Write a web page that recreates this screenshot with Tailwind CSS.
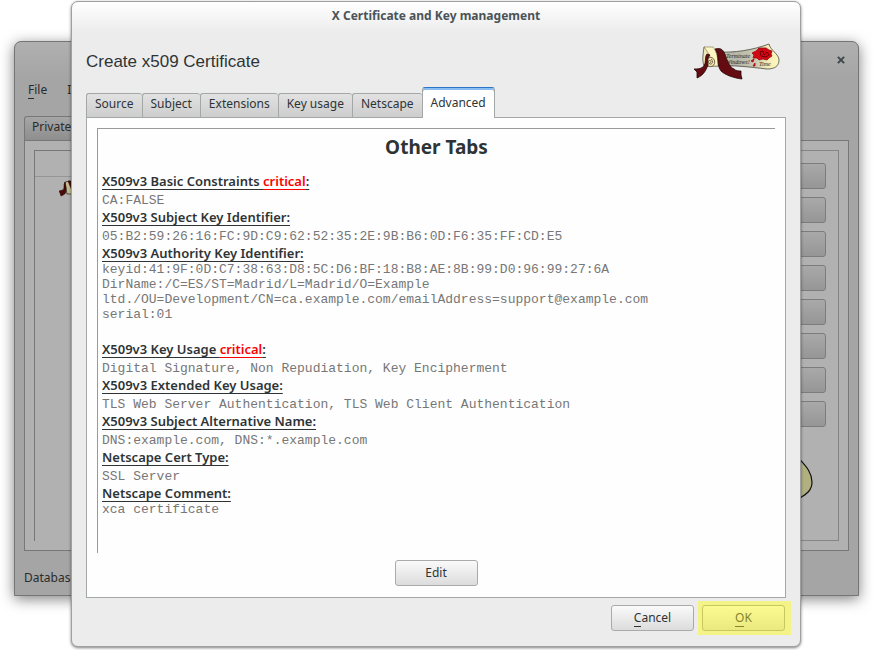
<!DOCTYPE html>
<html lang="en">
<head>
<meta charset="utf-8">
<title>X Certificate and Key management</title>
<script src="https://cdn.jsdelivr.net/npm/@tailwindcss/browser@4"></script>
</head>
<body class="relative min-h-screen overflow-hidden bg-white font-['Noto_Sans',sans-serif] text-[12px] leading-[18px] text-[#2e3436]">

<!-- Main window, dimmed behind the dialog -->
<div class="absolute inset-x-[14px] top-[41px] flex flex-col rounded-t-[7px] border border-[#757575] bg-[#a5a5a5] bg-linear-to-b from-[#b0b0b0] to-[#a5a5a5] to-[36px] px-[9px] pb-2 text-[#2b2b2b] shadow-[0_3px_14px_rgba(0,0,0,0.5)]">
  <header class="flex h-[36px] items-center justify-end px-1">
    <button aria-label="Close" class="text-[#3c484c]"><svg class="size-[8px]" viewBox="0 0 9 9" fill="none" stroke="currentColor" stroke-width="2.2"><path d="M1 1l7 7M8 1l-7 7"/></svg></button>
  </header>
  <nav class="flex h-[38px] gap-[20px] px-1 pt-[3px]"><a href="#"><span class="border-b border-current">F</span>ile</a><a href="#">Import</a></nav>
  <div class="flex"><button class="h-[24px] rounded-t-[3px] border border-b-0 border-[#777] bg-linear-to-b from-[#a6a6a6] to-[#8e8e8e] px-[7px] pb-[3px]">Private Keys</button></div>
  <main class="flex h-[411px] border border-[#777] bg-[#b1b1b1] p-[9px]">
    <div class="flex-1 border-t border-l border-[#777]">
      <div class="h-[26px] border-b border-[#959595]"></div>
      <svg class="mt-[3px] ml-[24px] h-[17px] w-[28px]" viewBox="0 0 28 17"><path d="M6 2l5-1 5 13H8z" fill="#c3bf91" stroke="#222" stroke-width=".7"/><path d="M6 2c-2 3 0 6-2 8l-4 1 1 2 1 3c5-2 5-3 5-8zM9 1l5 12 4 3-3-15z" fill="#4d0909" stroke="#170000" stroke-width=".5"/></svg>
    </div>
    <div class="flex w-[150px] flex-col gap-2 border border-[#858585] px-[12px] pt-3">
      <button aria-label="New Key" class="h-[26px] shrink-0 rounded-[3px] border border-[#7c7c7c] bg-linear-to-b from-[#a9a9a9] to-[#969696]"></button>
      <button aria-label="Export" class="h-[26px] shrink-0 rounded-[3px] border border-[#7c7c7c] bg-linear-to-b from-[#a9a9a9] to-[#969696]"></button>
      <button aria-label="Import" class="h-[26px] shrink-0 rounded-[3px] border border-[#7c7c7c] bg-linear-to-b from-[#a9a9a9] to-[#969696]"></button>
      <button aria-label="Import PFX" class="h-[26px] shrink-0 rounded-[3px] border border-[#7c7c7c] bg-linear-to-b from-[#a9a9a9] to-[#969696]"></button>
      <button aria-label="Show Details" class="h-[26px] shrink-0 rounded-[3px] border border-[#7c7c7c] bg-linear-to-b from-[#a9a9a9] to-[#969696]"></button>
      <button aria-label="Delete" class="h-[26px] shrink-0 rounded-[3px] border border-[#7c7c7c] bg-linear-to-b from-[#a9a9a9] to-[#969696]"></button>
      <button aria-label="Rename" class="h-[26px] shrink-0 rounded-[3px] border border-[#7c7c7c] bg-linear-to-b from-[#a9a9a9] to-[#969696]"></button>
      <button aria-label="Change Password" class="h-[26px] shrink-0 rounded-[3px] border border-[#7c7c7c] bg-linear-to-b from-[#a9a9a9] to-[#969696]"></button>
      <svg class="mt-5 mr-[13px] h-[50px] w-[60px] shrink-0 self-end" viewBox="0 0 60 50"><path d="M0 12L44 1c5 7 15 14 15 26 0 8-5 12-12 16L0 40z" fill="#b0b080" stroke="#111" stroke-width="1.2"/></svg>
    </div>
  </main>
  <footer class="pt-[18px]">Database: example.xdb</footer>
</div>

<!-- Certificate dialog -->
<section class="relative mr-[72px] ml-[71px] mt-px flex flex-col rounded-[7px] border border-[#a0a0a0] bg-[#ececec] bg-linear-to-b from-white to-[#ececec] to-[30px] px-[14px] pb-[11px] shadow-[0_1px_3px_rgba(0,0,0,0.5)]">
  <h1 class="flex h-[28px] items-center justify-center font-bold text-[#4a5458]">X Certificate and Key management</h1>
  <div class="flex h-[57px] items-start justify-between pr-[6px]">
    <h2 class="pt-[22px] font-['Liberation_Sans',sans-serif] text-[17px] leading-[20px]">Create x509 Certificate</h2>
    <svg class="mt-[11px] h-[40px] w-[90px]" viewBox="0 0 90 40" role="img" aria-label="Certificate scroll">
      <defs><linearGradient id="paper" x2="1"><stop stop-color="#f3ebb9"/><stop offset=".25" stop-color="#c9c8b0"/><stop offset=".4" stop-color="#b4b4a8"/><stop offset=".7" stop-color="#c9c9b4"/><stop offset=".85" stop-color="#f3ecb6"/><stop offset="1" stop-color="#fff8bd"/></linearGradient></defs>
      <path d="M14 6l13 5c17 1 36-2 52-8 1 6 10 10 10 16 0 6-4 9-12 9-18-2-32-4-50-3l-13 0c-2-6-1-11 0-19z" fill="url(#paper)" stroke="#4c4b3c" stroke-width=".8"/>
      <path d="M14 6l9 0c4 5 5 12 5 19l-6 0c-1-7-1-10-8-19z" fill="#fff6c4" stroke="#77714b" stroke-width=".6"/>
      <ellipse cx="20.500" cy="21" rx="4.200" ry="4.600" fill="#f7eab3" stroke="#4e442e" stroke-width=".8"/><path d="M21 18c3 2 1 6-1 5s-2-4 0-3.500 1 2 0 2" fill="none" stroke="#4e442e" stroke-width=".8"/>
      <path d="M17 13c-3 4 0 9-4 13-3 2-6 2-9 2l3 3v6c7-3 9-8 11-13 0-3-1-7 2-10zM25 8c7-2 9 2 11 8s4 10 8 12c2 2 5 2 7 2l0 4 1 4c-8-1-17-4-21-8-5-6-1-16-6-22z" fill="#650b12" stroke="#260508" stroke-width=".8"/>
      <path d="M69 7l4 0 3 0 3 2 3 1-1 3 1 2-3 2-2 2-4-1-4 1-2-2-4 0 1-3-2-2 4-2z" fill="#d10813" stroke="#9b0811" stroke-width=".8"/><path d="M70 11l3-1 1 4 3-3 2 3-3 2-5-1z" fill="none" stroke="#590009" stroke-width=".9"/><path d="M61 20l3-2-1 3zM63 25l2-3v3z" fill="#d20c16" stroke="#a40912" stroke-width=".8"/>
      <g fill="#252520" font-family="Liberation Serif, serif" font-style="italic"><text x="36" y="17" font-size="6">Terminate</text><text x="36" y="23" font-size="6">Windows!</text><text x="69" y="25" font-size="6">Time</text></g>
    </svg>
  </div>

  <div role="tablist" class="flex h-[30px] items-end">
    <button role="tab" class="h-[24px] rounded-t-[3px] border border-r-0 border-b-0 border-[#a3a7a7] bg-linear-to-b from-[#e2e2e2] to-[#cdcdcd] px-2 pb-1">Source</button>
    <button role="tab" class="h-[24px] rounded-t-[3px] border border-r-0 border-b-0 border-[#a3a7a7] bg-linear-to-b from-[#e2e2e2] to-[#cdcdcd] px-2 pb-1">Subject</button>
    <button role="tab" class="h-[24px] rounded-t-[3px] border border-r-0 border-b-0 border-[#a3a7a7] bg-linear-to-b from-[#e2e2e2] to-[#cdcdcd] px-2 pb-1">Extensions</button>
    <button role="tab" class="h-[24px] rounded-t-[3px] border border-r-0 border-b-0 border-[#a3a7a7] bg-linear-to-b from-[#e2e2e2] to-[#cdcdcd] px-2 pb-1">Key usage</button>
    <button role="tab" class="h-[24px] rounded-t-[3px] border border-r-0 border-b-0 border-[#a3a7a7] bg-linear-to-b from-[#e2e2e2] to-[#cdcdcd] px-2 pb-1">Netscape</button>
    <button role="tab" aria-selected="true" class="relative -mb-px h-[31px] rounded-t-[3px] border border-b-0 border-[#a3a7a7] border-t-[#2a76c6] bg-white px-2 pb-px shadow-[inset_0_2px_0_#8abdf0]">Advanced</button>
  </div>

  <div role="tabpanel" class="flex flex-col items-center border border-[#a3a7a7] bg-[#fefefe] px-[10px] pt-[10px] pb-[11px]">
    <article class="h-[425px] w-full border-t border-l border-[#9a9a9a] px-1 pt-[5px]">
      <h3 class="mb-[11px] text-center text-[19px] leading-[27px] font-bold">Other Tabs</h3>
      <dl class="font-['Liberation_Mono',monospace] text-[13px] text-[#777] [&>dt]:font-['Noto_Sans',sans-serif] [&>dt]:font-semibold [&>dt]:text-[#2e3436] [&>dt]:underline [&>dt]:underline-offset-3">
        <dt>X509v3 Basic Constraints <span class="text-[#f00] underline underline-offset-3">critical</span>:</dt>
        <dd class="pt-[4px] leading-[14px]">CA:FALSE</dd>
        <dt>X509v3 Subject Key Identifier:</dt>
        <dd class="pt-[4px] leading-[14px]">05:B2:59:26:16:FC:9D:C9:62:52:35:2E:9B:B6:0D:F6:35:FF:CD:E5</dd>
        <dt>X509v3 Authority Key Identifier:</dt>
        <dd class="mb-[18px] leading-[15px]">keyid:41:9F:0D:C7:38:63:D8:5C:D6:BF:18:B8:AE:8B:99:D0:96:99:27:6A<br>DirName:/C=ES/ST=Madrid/L=Madrid/O=Example<br>ltd./OU=Development/CN=ca.example.com/emailAddress=support@example.com<br>serial:01</dd>
        <dt>X509v3 Key Usage <span class="text-[#f00] underline underline-offset-3">critical</span>:</dt>
        <dd class="pt-[4px] leading-[14px]">Digital Signature, Non Repudiation, Key Encipherment</dd>
        <dt>X509v3 Extended Key Usage:</dt>
        <dd class="pt-[4px] leading-[14px]">TLS Web Server Authentication, TLS Web Client Authentication</dd>
        <dt>X509v3 Subject Alternative Name:</dt>
        <dd class="pt-[4px] leading-[14px]">DNS:example.com, DNS:*.example.com</dd>
        <dt>Netscape Cert Type:</dt>
        <dd class="pt-[4px] leading-[14px]">SSL Server</dd>
        <dt>Netscape Comment:</dt>
        <dd class="leading-[15px]">xca certificate</dd>
      </dl>
    </article>
    <button class="mt-[7px] h-[26px] w-[83px] rounded-[3px] border border-[#aaa] bg-linear-to-b from-[#fafafa] to-[#dcdcdc]">Edit</button>
  </div>

  <div class="mt-[3px] flex justify-end">
    <button class="mt-[4px] mr-1 h-[26px] w-[83px] rounded-[3px] border border-[#aaa] bg-linear-to-b from-[#fafafa] to-[#dcdcdc]"><span class="border-b border-current">C</span>ancel</button>
    <div class="-mr-[5px] bg-[#f3f388] px-1 py-[4px] pr-[6px]">
      <button class="h-[26px] w-[83px] rounded-[3px] border border-[#c8c860] bg-linear-to-b from-[#fbfb91] to-[#e9e97f] text-[#85852a]"><span class="border-b border-current">O</span>K</button>
    </div>
  </div>
</section>
</body>
</html>
